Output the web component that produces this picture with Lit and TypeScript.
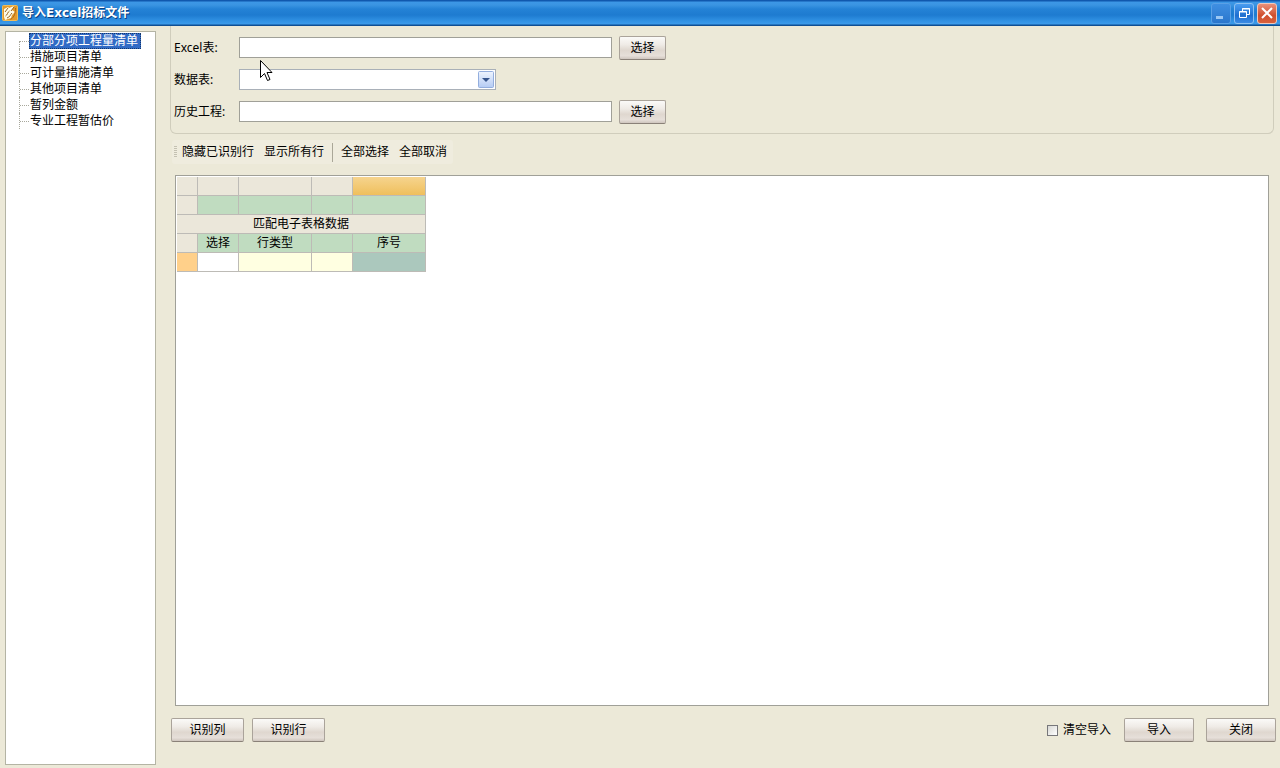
import { LitElement, html, css, svg } from "lit";
import { customElement, state } from "lit/decorators.js";
import { classMap } from "lit/directives/class-map.js";

const SECTIONS = ["分部分项工程量清单", "措施项目清单", "可计量措施清单", "其他项目清单", "暂列金额", "专业工程暂估价"];

@customElement("app-root")
export class AppRoot extends LitElement {
  @state() private selected = 0;

  static styles = css`
    :host {
      display: flex;
      flex-direction: column;
      position: relative;
      height: 100vh;
      overflow: hidden;
      background: #ece9d8;
      color: #000;
      font: 12px/16px "Liberation Sans", "Noto Sans CJK SC", sans-serif;
    }
    * { box-sizing: border-box; }
    button, input, select { font: inherit; color: inherit; margin: 0; }
    svg { display: block; }
    .titlebar {
      flex: none;
      display: flex;
      align-items: center;
      height: 26px;
      padding: 0 3px 0 2px;
      background: linear-gradient(#1058ae 0, #1058ae 1px, #3c97e6 2px, #3a94e2 5px, #2482d6 9px, #1e7bd0 15px, #3192e4 21px, #3c9bea 24px, #0f4f94 25px, #0f4f94 26px);
    }
    .title {
      flex: 1;
      margin: 0 0 0 4px;
      font-family: "DejaVu Sans", "Noto Sans CJK SC", sans-serif;
      font-size: 12px;
      font-weight: bold;
      color: #fff;
      text-shadow: 1px 1px 0 #0c3f80;
    }
    .caption { display: flex; gap: 3px; }
    .cap {
      width: 20px;
      height: 21px;
      padding: 0;
      border: 1px solid #8cc0f2;
      border-radius: 3px;
      background: linear-gradient(#4a9df0, #1f6fd0 60%, #3a8be4);
    }
    .cap.min { border-color: #5aa0e6; background: linear-gradient(#3f8fe2, #2a76cc); }
    .cap.close { border-color: #f0c8bc; background: linear-gradient(#e8907a, #d0502e 60%, #d8603c); }
    .body {
      flex: 1;
      min-height: 0;
      display: grid;
      grid-template-columns: 151px minmax(0, 1fr);
      column-gap: 14px;
      padding: 0 4px 0 5px;
    }
    .tree {
      margin: 5px 0 3px;
      padding: 1px 0 0 13px;
      border: 1px solid #b4b4a4;
      background: #fff;
    }
    .tree ul { margin: 0; padding: 0; list-style: none; }
    .node {
      display: flex;
      align-items: flex-start;
      height: 16px;
      border-left: 1px dotted #a8a89c;
    }
    .node:first-child { height: 8px; margin-top: 8px; }
    .node::before { content: ""; width: 9px; margin-top: 8px; border-top: 1px dotted #a8a89c; }
    .node:first-child::before { margin-top: 0; }
    .node:first-child .leaf { margin-top: -8px; }
    .leaf {
      height: 16px;
      padding: 0 3px 0 1px;
      border: 0;
      background: none;
      line-height: 16px;
      white-space: nowrap;
    }
    .leaf.on { background: #316ac5; color: #fff; outline: 1px dotted #14386c; outline-offset: -1px; }
    .main { display: flex; flex-direction: column; min-width: 0; }
    .source {
      display: grid;
      grid-template-columns: 65px auto;
      grid-auto-rows: 25px;
      row-gap: 7px;
      margin-right: 2px;
      padding: 9px 3px 9px;
      border: 1px solid #d0cdbc;
      border-top: 0;
      border-radius: 0 0 6px 6px;
      align-items: center;
    }
    .source > label { font-family: "Noto Sans", "Noto Sans CJK SC", sans-serif; }
    .field { display: flex; align-items: center; gap: 7px; }
    .text {
      width: 373px;
      height: 21px;
      padding: 0 4px;
      border: 1px solid #a0a098;
      border-radius: 0;
      background: #fff;
    }
    .combo { display: grid; width: 257px; }
    .combo > * { grid-area: 1 / 1; }
    .combo select {
      appearance: none;
      height: 21px;
      padding: 0 20px 0 4px;
      border: 1px solid #a9b0b8;
      border-radius: 0;
      background: #fff;
    }
    .arrow { justify-self: end; align-self: center; margin-right: 2px; pointer-events: none; }
    .btn {
      height: 24px;
      padding: 0;
      border: 1px solid #aaa39a;
      border-bottom-color: #8a8178;
      border-radius: 2px;
      background: linear-gradient(#fbfaf8, #efebe6 35%, #dfd7cf 60%, #e6dfd9 85%, #cfc6be);
    }
    .pick { width: 47px; }
    .wide { width: 73px; }
    .act { width: 70px; }
    .toolbar {
      align-self: flex-start;
      display: flex;
      align-items: center;
      height: 24px;
      margin: 6px 0 11px 2px;
      padding: 0 6px 0 2px;
      border-radius: 3px;
      background: #efecde;
    }
    .grip { width: 3px; height: 12px; margin-right: 5px; background: repeating-linear-gradient(#c4c1b2 0 1px, #f0eddf 1px 2px); }
    .tool { padding: 0; border: 0; background: none; white-space: nowrap; }
    .tool + .tool { margin-left: 10px; }
    .sep { width: 1px; height: 19px; margin: 0 8px; background: #aaa798; }
    .sheet {
      flex: 1;
      margin: 0 7px 0 5px;
      padding: 1px;
      border: 1px solid #a0a098;
      background: #fff;
    }
    table { border-collapse: separate; border-spacing: 0; table-layout: fixed; width: 249px; }
    td, th {
      height: 19px;
      padding: 0;
      border-right: 1px solid #bdbbb6;
      border-bottom: 1px solid #bdbbb6;
      background: #ebe7da;
      font-weight: normal;
      line-height: 18px;
      text-align: center;
    }
    .c1 { width: 21px; }
    .c2 { width: 41px; }
    .c3 { width: 73px; }
    .green { background: #c0dcc0; }
    .gold { background: linear-gradient(#f6d48e, #efbf5c); }
    .mark { background: #ffd08a; }
    .white { background: #fff; }
    .cream { background: #ffffe1; }
    .teal { background: #abc8bd; }
    .footer { display: flex; align-items: center; margin: 12px 0 26px 1px; }
    .footer .wide + .wide { margin-left: 8px; }
    .clear { display: flex; align-items: center; gap: 5px; margin: 0 13px 0 auto; }
    .clear input {
      appearance: none;
      width: 11px;
      height: 11px;
      border: 1px solid #77777a;
      background: linear-gradient(135deg, #d8d8d4, #fff);
    }
    .act + .act { margin-left: 12px; }
    .pointer { position: absolute; left: 260px; top: 59px; pointer-events: none; }
  `;

  private appIcon() {
    return svg`<svg width="16" height="18" viewBox="0 0 16 18" aria-hidden="true">
      <rect x="0.5" y="1.5" width="15" height="15" rx="1" fill="#e39a2c" stroke="#f0bc58"/>
      <path d="M2 5l4-2 1 1 5-2-2 4 3 2-3 3-1 3-6 2-1-3z" fill="#fffbe6"/>
      <path d="M3 8l3-4M3.500 12c2-1 2-4 4-5M5 14c3-1 3-3 5-5M9 7l3-4" fill="none" stroke="#9a6420"/>
      <path d="M13.500 4c0 5-1 9-5 11.500" fill="none" stroke="#b06812"/>
    </svg>`;
  }

  render() {
    return html`
      <header class="titlebar">
        ${this.appIcon()}
        <h1 class="title">导入Excel招标文件</h1>
        <div class="caption">
          <button class="cap min" aria-label="最小化">
            <svg width="18" height="19"><rect x="4" y="12" width="7" height="3" fill="#9cc8f4"/></svg>
          </button>
          <button class="cap" aria-label="还原">
            <svg width="18" height="19" fill="none" stroke="#fff">
              <path d="M7.500 7V4.500h7v6H12M7 5h8"/><path d="M4.500 7.500h7v6h-7zM4 8h8"/>
            </svg>
          </button>
          <button class="cap close" aria-label="关闭窗口">
            <svg width="18" height="19"><path d="M4 4l10 10M14 4L4 14" stroke="#fff" stroke-width="2"/></svg>
          </button>
        </div>
      </header>
      <div class="body">
        <nav class="tree">
          <ul>
            ${SECTIONS.map((name, i) => html`<li class="node">
              <button class=${classMap({ leaf: true, on: i === this.selected })} @click=${() => (this.selected = i)}>${name}</button>
            </li>`)}
          </ul>
        </nav>
        <main class="main">
          <section class="source">
            <label for="excel">Excel表:</label>
            <div class="field"><input id="excel" class="text" type="text"><button class="btn pick">选择</button></div>
            <label for="data">数据表:</label>
            <div class="field">
              <div class="combo">
                <select id="data"><option></option></select>
                <svg class="arrow" width="16" height="17">
                  <defs><linearGradient id="face" x2="0" y2="1"><stop stop-color="#eef4fe"/><stop offset="1" stop-color="#b4cbf4"/></linearGradient></defs>
                  <rect x="0.5" y="0.5" width="15" height="16" rx="1" fill="url(#face)" stroke="#93aede"/>
                  <path d="M4 7h8l-4 4z" fill="#35548c"/>
                </svg>
              </div>
            </div>
            <label for="history">历史工程:</label>
            <div class="field"><input id="history" class="text" type="text"><button class="btn pick">选择</button></div>
          </section>
          <div class="toolbar" role="toolbar">
            <span class="grip"></span>
            <button class="tool">隐藏已识别行</button><button class="tool">显示所有行</button>
            <span class="sep"></span>
            <button class="tool">全部选择</button><button class="tool">全部取消</button>
          </div>
          <div class="sheet">
            <table>
              <colgroup><col class="c1"><col class="c2"><col class="c3"><col class="c2"><col class="c3"></colgroup>
              <tbody>
                <tr><td></td><td></td><td></td><td></td><td class="gold"></td></tr>
                <tr><td></td><td class="green"></td><td class="green"></td><td class="green"></td><td class="green"></td></tr>
                <tr><th colspan="5">匹配电子表格数据</th></tr>
                <tr><td></td><th class="green">选择</th><th class="green">行类型</th><th class="green"></th><th class="green">序号</th></tr>
                <tr><td class="mark"></td><td class="white"></td><td class="cream"></td><td class="cream"></td><td class="teal"></td></tr>
              </tbody>
            </table>
          </div>
          <footer class="footer">
            <button class="btn wide">识别列</button><button class="btn wide">识别行</button>
            <label class="clear"><input type="checkbox">清空导入</label>
            <button class="btn act">导入</button><button class="btn act">关闭</button>
          </footer>
        </main>
      </div>
      <svg class="pointer" width="13" height="23" aria-hidden="true">
        <path d="M0.500 1.500v17l4-4 3 7 2.500-1-3-7h5z" fill="#fff" stroke="#000"/>
      </svg>
    `;
  }
}
